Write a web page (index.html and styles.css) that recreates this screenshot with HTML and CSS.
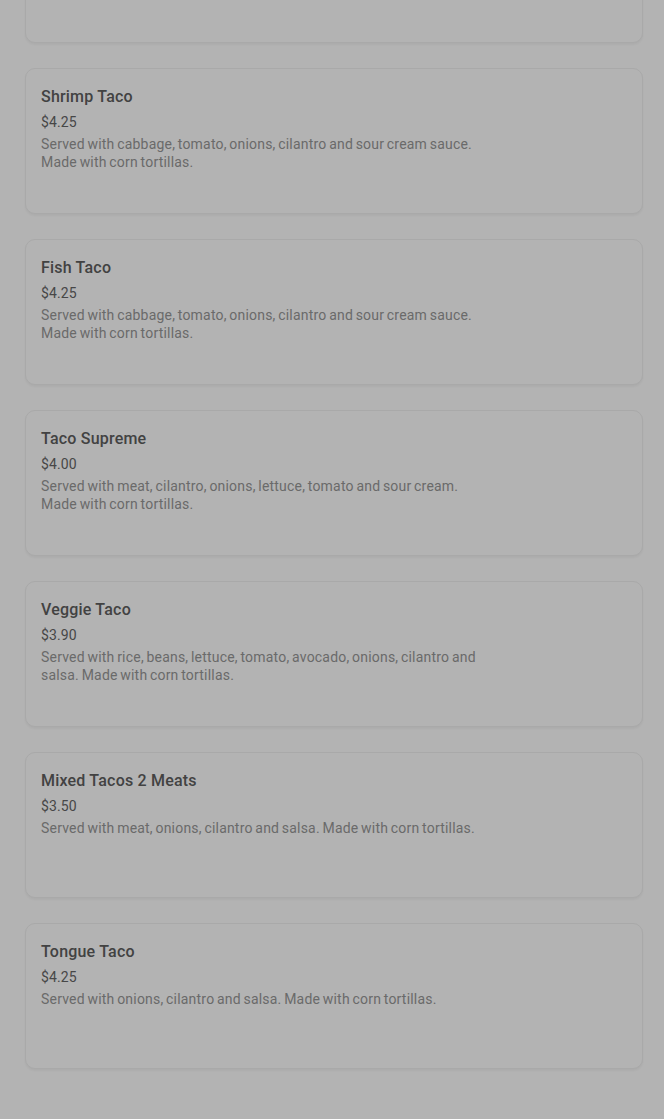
FILE: index.html
```html
<!DOCTYPE html>
<html lang="en">
<head>
<meta charset="utf-8">
<title>Menu</title>
<link rel="stylesheet" href="styles.css">
</head>
<body>
<main class="menu-list">
  <article class="item-card">
    <div class="item-text">
      <h3 class="item-name">Birria Taco</h3>
      <div class="item-price">$4.50</div>
      <p class="item-desc">Served with birria meat, onions and cilantro, with consommé on the side. Made with corn tortillas.</p>
    </div>
  </article>
  <article class="item-card">
    <div class="item-text">
      <h3 class="item-name">Shrimp Taco</h3>
      <div class="item-price">$4.25</div>
      <p class="item-desc">Served with cabbage, tomato, onions, cilantro and sour cream sauce. Made with corn tortillas.</p>
    </div>
  </article>
  <article class="item-card">
    <div class="item-text">
      <h3 class="item-name">Fish Taco</h3>
      <div class="item-price">$4.25</div>
      <p class="item-desc">Served with cabbage, tomato, onions, cilantro and sour cream sauce. Made with corn tortillas.</p>
    </div>
  </article>
  <article class="item-card">
    <div class="item-text">
      <h3 class="item-name">Taco Supreme</h3>
      <div class="item-price">$4.00</div>
      <p class="item-desc">Served with meat, cilantro, onions, lettuce, tomato and sour cream. Made with corn tortillas.</p>
    </div>
  </article>
  <article class="item-card">
    <div class="item-text">
      <h3 class="item-name">Veggie Taco</h3>
      <div class="item-price">$3.90</div>
      <p class="item-desc">Served with rice, beans, lettuce, tomato, avocado, onions, cilantro and salsa. Made with corn tortillas.</p>
    </div>
  </article>
  <article class="item-card">
    <div class="item-text">
      <h3 class="item-name">Mixed Tacos 2 Meats</h3>
      <div class="item-price">$3.50</div>
      <p class="item-desc">Served with meat, onions, cilantro and salsa. Made with corn tortillas.</p>
    </div>
  </article>
  <article class="item-card">
    <div class="item-text">
      <h3 class="item-name">Tongue Taco</h3>
      <div class="item-price">$4.25</div>
      <p class="item-desc">Served with onions, cilantro and salsa. Made with corn tortillas.</p>
    </div>
  </article>
</main>
</body>
</html>
```

FILE: styles.css
```css
html, body {
  margin: 0;
  padding: 0;
  background: #b3b3b3;
}

body {
  font-family: Roboto, "Liberation Sans", Arial, sans-serif;
  overflow: hidden;
  height: 1119px;
}

.menu-list {
  display: flex;
  flex-direction: column;
  gap: 25px;
  margin-top: -103px;
  padding: 0 21px 0 25px;
}

.item-card {
  box-sizing: border-box;
  height: 146px;
  padding: 16px 16px 16px 15px;
  border: 1px solid #a9a9a9;
  border-radius: 10px;
  background: #b3b3b3;
  box-shadow: 0 2px 2px rgba(0, 0, 0, 0.04);
  display: flex;
}

.item-text {
  width: 452px;
  display: flex;
  flex-direction: column;
  gap: 4px;
}

.item-name {
  margin: 0;
  font-size: 16px;
  line-height: 24px;
  font-weight: 500;
  letter-spacing: 0.2px;
  color: #424242;
}

.item-price {
  font-size: 14px;
  line-height: 18px;
  letter-spacing: 0.1px;
  color: #474747;
}

.item-desc {
  margin: 0;
  font-size: 14px;
  line-height: 18px;
  color: #6a6a6a;
  letter-spacing: 0.2px;
  word-spacing: -1px;
}
```
